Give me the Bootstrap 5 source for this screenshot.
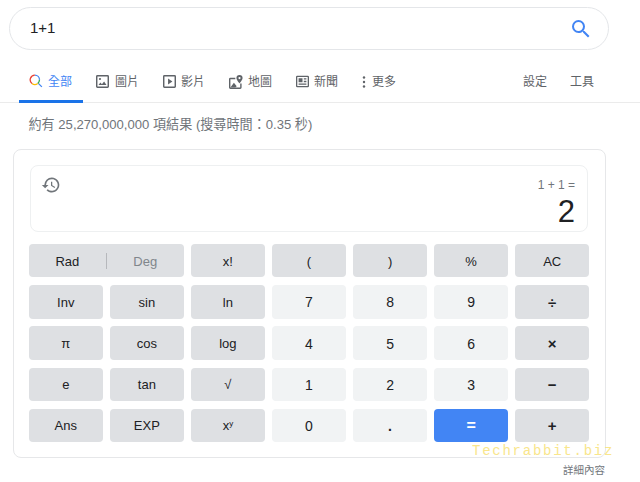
<!DOCTYPE html>
<html lang="zh-Hant">
<head>
<meta charset="utf-8">
<title>1+1</title>
<link href="https://cdn.jsdelivr.net/npm/bootstrap@5.3.0/dist/css/bootstrap.min.css" rel="stylesheet">
<style>
html,body{height:482px;overflow:hidden}
body{font-family:"Liberation Sans","Noto Sans CJK TC",sans-serif;background:#fff;color:#202124;padding-top:7px;width:640px}
.sbox{margin-left:9px;width:600px;height:43px;border:1px solid #e4e6e9;border-radius:22px;padding:0 15px 0 20px;font-size:15px;color:#202124}
.tabbar{height:53px;margin-top:0;border-bottom:1px solid #ebebeb;padding:0 46px 0 19px;font-size:12px;color:#5f6368}
.tabitem{height:100%;padding-top:25px;color:#5f6368;text-decoration:none;line-height:14px}
.tabitem svg{flex:none}
.t-all{width:64px;padding-left:10px;color:#4285f4;border-bottom:3px solid #1a73e8;gap:5px;margin-right:13px;height:calc(100% + 1px);}
.t-all svg{margin-top:-1px}
.t-img{gap:6px;width:67px}.t-vid{gap:5px;width:66px}.t-map{gap:5px;width:67px}.t-news{gap:5px;width:66px}.t-more{gap:6px}
.tabtools{gap:23px}
.stats{font-size:13.1px;color:#70757a;margin:13px 0 0 28.5px;line-height:17px}
.calc{margin:16px 0 0 13px;width:593px;height:309px;border:1px solid #e6e7e9;border-radius:8px;padding:15px 16px 0 15px;background:#fff}
.screen{margin-left:1px;width:558px;height:67px;border:1px solid #eef0f1;border-radius:8px;padding:9px 12px 0 10px}
.expr{font-size:12px;color:#70757a;line-height:14px;margin-top:3px}
.result{font-size:31px;line-height:34px;color:#202124;margin-top:3px}
.keys{display:grid;grid-template-columns:repeat(7,1fr);grid-auto-rows:33.4px;gap:7.8px 7.5px;margin-top:12px;width:560px}
.key{padding:1px 0 0;border:0;border-radius:4px;background:#dee0e3;color:#202124;font-size:13px;line-height:1;font-family:inherit}
.key:hover,.key:active{background:#dee0e3;color:#202124}
.num{background:#f1f3f4;font-size:14px}
.num:hover,.num:active{background:#f1f3f4;color:#202124}
.eq{background:#4285f4;color:#fff;font-weight:700;font-size:16px}
.eq:hover,.eq:active{background:#4285f4;color:#fff}
.opk{font-size:15px;font-weight:700}
.rad{grid-column:span 2}
.rad span{flex:1}
.rad i{width:1px;height:16px;background:#b6b8bc}
.rad .deg{color:#80868b}
.key sup{font-size:8px;top:-.5em}
.more-link{position:absolute;left:563px;top:463px;font-size:10.5px;color:#70757a}
.mark-w{position:absolute;left:472px;top:443px;font-family:"Liberation Mono",monospace;font-size:14px;letter-spacing:1.75px;color:#f9e68c;line-height:16px;white-space:nowrap}
</style>
</head>
<body>
<div class="sbox d-flex align-items-center justify-content-between">
  <span>1+1</span>
  <svg width="24" height="24" viewBox="0 0 24 24" fill="#4285f4"><path d="M15.5 14h-.79l-.28-.27A6.47 6.47 0 0 0 16 9.5 6.5 6.5 0 1 0 9.5 16c1.61 0 3.09-.59 4.23-1.57l.27.28v.79l5 4.99L20.49 19l-4.99-5zm-6 0C7.01 14 5 11.99 5 9.5S7.01 5 9.5 5 14 7.01 14 9.5 11.99 14 9.5 14z"/></svg>
</div>
<nav class="tabbar d-flex justify-content-between">
  <div class="d-flex h-100">
    <a class="tabitem t-all d-flex" href="#"><svg width="14" height="14" viewBox="0 0 24 24" fill="none" stroke-width="2.2"><path d="M16 16l6 6" stroke="#4285f4"/><path d="M10 2a8 8 0 0 1 8 8" stroke="#4285f4"/><path d="M18 10a8 8 0 0 1-3 6.2" stroke="#34a853"/><path d="M15 16.2A8 8 0 0 1 5 16.2" stroke="#fbbc05"/><path d="M5 16.2A8 8 0 0 1 10 2" stroke="#ea4335"/></svg><span>全部</span></a>
    <a class="tabitem t-img d-flex" href="#"><svg width="13" height="13" viewBox="3 3 18 18" fill="#5f6368"><path d="M19 3H5a2 2 0 0 0-2 2v14a2 2 0 0 0 2 2h14a2 2 0 0 0 2-2V5a2 2 0 0 0-2-2zm0 16H5V5h14v14z"/><path d="M14.2 12l-3 3.9-2.1-2.6L6.5 17h11z"/><circle cx="8.5" cy="8.5" r="1.5"/></svg><span>圖片</span></a>
    <a class="tabitem t-vid d-flex" href="#"><svg width="13" height="13" viewBox="3 3 18 18" fill="#5f6368"><path d="M19 3H5a2 2 0 0 0-2 2v14a2 2 0 0 0 2 2h14a2 2 0 0 0 2-2V5a2 2 0 0 0-2-2zm0 16H5V5h14v14z"/><path d="M10 8v8l6-4z"/></svg><span>影片</span></a>
    <a class="tabitem t-map d-flex" href="#"><svg width="14" height="14" viewBox="3 1 20 20" fill="#5f6368"><path d="M19 21H5a2 2 0 0 1-2-2V7a2 2 0 0 1 2-2h7v2H5v12h14v-6h2v6a2 2 0 0 1-2 2z"/><path d="M5 19l5-7 4 5-2 2z"/><path d="M18 1a4.4 4.4 0 0 0-4.4 4.4c0 3 4.4 7.6 4.4 7.6s4.4-4.6 4.4-7.6A4.4 4.4 0 0 0 18 1zm0 6a1.6 1.6 0 1 1 0-3.2A1.6 1.6 0 0 1 18 7z"/></svg><span>地圖</span></a>
    <a class="tabitem t-news d-flex" href="#"><svg width="13" height="13" viewBox="2 3 20 18" fill="#5f6368"><path d="M20 3H4a2 2 0 0 0-2 2v14a2 2 0 0 0 2 2h16a2 2 0 0 0 2-2V5a2 2 0 0 0-2-2zm0 16H4V5h16v14z"/><path d="M6 7h6v6H6zM14 7h4v2h-4zM14 11h4v2h-4zM6 15h12v2H6z"/></svg><span>新聞</span></a>
    <a class="tabitem t-more d-flex" href="#"><svg width="4" height="14" viewBox="0 0 4 14" fill="#5f6368"><circle cx="2" cy="2.5" r="1.2"/><circle cx="2" cy="7" r="1.2"/><circle cx="2" cy="11.5" r="1.2"/></svg><span>更多</span></a>
  </div>
  <div class="tabtools d-flex h-100">
    <a class="tabitem" href="#">設定</a>
    <a class="tabitem" href="#">工具</a>
  </div>
</nav>
<div class="stats">約有 25,270,000,000 項結果 (搜尋時間：0.35 秒)</div>
<section class="calc">
  <div class="screen d-flex justify-content-between">
    <svg width="20" height="20" viewBox="0 0 24 24" fill="#70757a"><path d="M13 3a9 9 0 0 0-9 9H1l3.9 3.9.07.14L9 12H6a7 7 0 1 1 2.05 4.95l-1.42 1.42A9 9 0 1 0 13 3zm-1 5v5l4.28 2.54.72-1.21-3.5-2.08V8z"/></svg>
    <div class="text-end">
      <div class="expr">1 + 1 =</div>
      <div class="result">2</div>
    </div>
  </div>
  <div class="keys">
    <button class="btn key rad d-flex align-items-center"><span>Rad</span><i></i><span class="deg">Deg</span></button>
    <button class="btn key">x!</button>
    <button class="btn key">(</button>
    <button class="btn key">)</button>
    <button class="btn key">%</button>
    <button class="btn key">AC</button>
    <button class="btn key">Inv</button>
    <button class="btn key">sin</button>
    <button class="btn key">ln</button>
    <button class="btn key num">7</button>
    <button class="btn key num">8</button>
    <button class="btn key num">9</button>
    <button class="btn key opk">÷</button>
    <button class="btn key">π</button>
    <button class="btn key">cos</button>
    <button class="btn key">log</button>
    <button class="btn key num">4</button>
    <button class="btn key num">5</button>
    <button class="btn key num">6</button>
    <button class="btn key opk">×</button>
    <button class="btn key">e</button>
    <button class="btn key">tan</button>
    <button class="btn key">√</button>
    <button class="btn key num">1</button>
    <button class="btn key num">2</button>
    <button class="btn key num">3</button>
    <button class="btn key opk">−</button>
    <button class="btn key">Ans</button>
    <button class="btn key">EXP</button>
    <button class="btn key">x<sup>y</sup></button>
    <button class="btn key num">0</button>
    <button class="btn key num fw-bold">.</button>
    <button class="btn key eq">=</button>
    <button class="btn key opk">+</button>
  </div>
</section>
<a class="more-link text-decoration-none" href="#">詳細內容</a>
<div class="mark-w">Techrabbit.biz</div>
</body>
</html>
